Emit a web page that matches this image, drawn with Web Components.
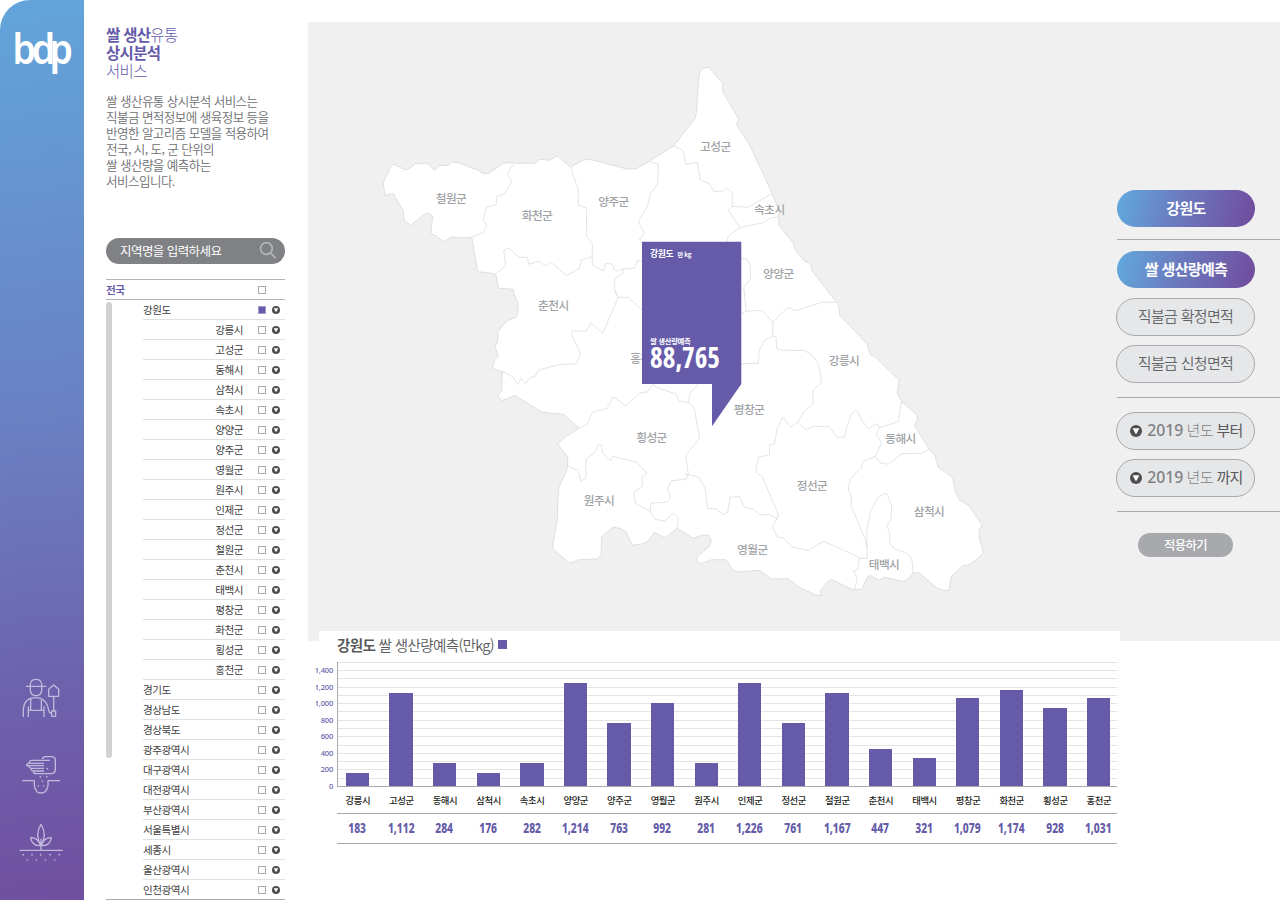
<!DOCTYPE html>
<html lang="ko">
<head>
<meta charset="utf-8">
<title>쌀 생산유통 상시분석 서비스</title>
<style>
  html, body { margin: 0; height: 900px; overflow: hidden; background: #fff; }
  body {
    font-family: "Noto Sans CJK KR", "Noto Sans", sans-serif; color: #58595b;
    --purple: #655ba9; --track: -0.045em;
  }
</style>
</head>
<body>
<bdp-app></bdp-app>
<script>
const define = (name, html, setup) => {
  const tpl = document.createElement('template');
  tpl.innerHTML = html;
  customElements.define(name, class extends HTMLElement {
    connectedCallback() {
      if (this.shadowRoot) return;
      const root = this.attachShadow({ mode: 'open' });
      root.append(tpl.content.cloneNode(true));
      if (setup) setup(root, this);
    }
  });
};

/* round badge with a white down arrow */
define('drop-mark', `
<style>
  :host { display: block; width: 8px; height: 8px; flex: none; white-space: normal; }
  svg { display: block; width: 100%; height: 100%; }
</style>
<svg viewBox="0 0 12 12"><circle cx="6" cy="6" r="6" fill="#4d4d4f"/><path d="M2.500 3.300h7L6 9.500z" fill="#fff"/></svg>`);

/* ---------- left rail ---------- */
define('nav-rail', `
<style>
  :host { display: flex; flex-direction: column; box-sizing: border-box; height: 900px; padding: 24px 0 36px 0;
    border-top-left-radius: 30px; background: linear-gradient(173deg, #62a5da 0%, #6a7fc1 48%, #6d62ac 76%, #704f9f 100%); }
  svg { display: block; fill: none; stroke: #bfb9dc; stroke-width: 4; stroke-linejoin: round; }
  .logo { width: 84px; height: 60px; stroke: none; fill: #fff; margin-bottom: auto; }
  .a { margin: 0 0 34px 20px; } .b { margin: 0 0 26px 20px; } .c { margin-left: 18px; }
  .dots { stroke-width: 5; stroke-linecap: round; }
</style>
<svg class="logo" viewBox="0 24 84 60"><text x="0" y="64.300" dx="0 -4.700 -6.300" transform="translate(12.600 0) scale(.89 1)" font-family="Noto Sans" font-weight="600" font-size="42">bdp</text></svg>
<svg class="a" width="44" height="44" viewBox="60 48 132 132">
  <path d="M78 79H139M91 79V72Q93 58 108 58T125 72V90Q124 107 108 107T91 90V79M70 171V146Q74 113 106 113Q139 113 146 150Q147 160 155 160M155 153H167V169H155ZM161 153V110M146 109V88L161 75L176 88V109ZM85 171V139M132 171V139M92 116V151M124 116V151M85 151H132"/>
</svg>
<svg class="b" width="44" height="42" viewBox="60 282 132 126">
  <path d="M128 297Q128 290 137 290H157Q166 291 166 301V329Q165 341 153 341H107Q101 341 101 335M150 301H95Q88 301 88 309M132 310H86Q80 310 80 317H132M86 318Q88 325 94 325H132M92 326Q94 333 100 333H132M66 362H103V376Q106 399 123 399T144 376V362H180"/>
  <path class="dots" d="M142 326h.1M121 350h.1M140 350h.1M127 364h.1M115 378h.1M131 378h.1"/>
</svg>
<svg class="c" width="48" height="42" viewBox="54 486 144 126">
  <path d="M59 571H188M123 571V536M123 493Q103 524 123 556Q143 524 123 493M92 532Q95 558 121 557Q116 534 92 532M154 532Q151 558 125 557Q130 534 154 532"/>
  <path class="dots" d="M70 584h.1M96 584h.1M122 584h.1M150 584h.1M178 584h.1M82 600h.1M109 600h.1M136 600h.1M164 600h.1"/>
</svg>`);

/* ---------- region list ---------- */
define('region-row', `
<style>
  :host { display: flex; align-items: center; box-sizing: border-box; height: 20px; margin-left: 37px; padding-right: 5px;
    border-bottom: 1px solid #dfe0e1; font-size: 10.6px; letter-spacing: var(--track); line-height: 18px; color: #414042; }
  .t { flex: 1; } :host([sub]) .t { text-align: right; padding-right: 15px; }
  .box { box-sizing: border-box; width: 8px; height: 8px; border: 1px solid #a7a9ac; margin-right: 6px; flex: none; }
  :host([on]) .box { background: var(--purple); border: 1px solid #a39dcb; }
  :host([all]) { margin-left: 0; padding-right: 13px; color: var(--purple); font-weight: 700; border-color: #b5b6b8; }
  :host([all]) drop-mark { display: none; }
</style>
<span class="t"><slot></slot></span><span class="box"></span><drop-mark></drop-mark>`);

define('region-list', `
<style>
  :host { display: block; width: 179px; border-top: 1px solid #b5b6b8; border-bottom: 1px solid #a7a9ac; }
  .scroll { display: flex; }
  .bar { width: 6px; height: 456px; margin: 2px -6px 0 0; border-radius: 3px; background: #d1d2d4; flex: none; }
  .rows { flex: 1; }
  region-row:last-child { border: 0; height: 19px; }
</style>
<region-row all>전국</region-row><div class="scroll"><div class="bar"></div><div class="rows"></div></div>`, root => {
  const sub = '강릉시 고성군 동해시 삼척시 속초시 양양군 양주군 영월군 원주시 인제군 정선군 철원군 춘천시 태백시 평창군 화천군 횡성군 홍천군'.split(' ');
  const top = '경기도 경상남도 경상북도 광주광역시 대구광역시 대전광역시 부산광역시 서울특별시 세종시 울산광역시 인천광역시'.split(' ');
  root.querySelector('.rows').innerHTML = '<region-row on>강원도</region-row>' +
    sub.map(n => `<region-row sub>${n}</region-row>`).join('') + top.map(n => `<region-row>${n}</region-row>`).join('');
});

define('search-box', `
<style>
  :host { display: flex; align-items: center; justify-content: space-between; box-sizing: border-box; width: 179px; height: 26px;
    border-radius: 13px; background: #808184; color: #fff; font-size: 12.5px; letter-spacing: var(--track); line-height: 26px; padding: 0 8px 0 14px; }
</style>
<span><slot></slot></span>
<svg width="18" height="18" viewBox="0 0 18 18" fill="none" stroke="#b3b5bd" stroke-width="1.7"><circle cx="7.400" cy="6.500" r="5.900"/><path d="M11.500 11l5 5.200"/></svg>`);

define('side-panel', `
<style>
  :host { display: block; padding: 25px 0 0 22px; }
  h1 { margin: 0; font-size: 15.5px; letter-spacing: var(--track); line-height: 18px; font-weight: 300; color: var(--purple); }
  h1 b { font-weight: 700; }
  p { margin: 14px 0 49px; height: 96px; font-size: 12.550px; letter-spacing: var(--track); line-height: 16px; font-weight: 350; color: #6d6e71; white-space: nowrap; }
  region-list { margin-top: 15px; }
</style>
<h1><b>쌀 생산</b>유통<br><b>상시분석</b><br>서비스</h1>
<p>쌀 생산유통 상시분석 서비스는<br>직불금 면적정보에 생육정보 등을<br>반영한 알고리즘 모델을 적용하여<br>전국, 시, 도, 군 단위의<br>쌀 생산량을 예측하는<br>서비스입니다.</p>
<search-box>지역명을 입력하세요</search-box>
<region-list></region-list>`);

/* ---------- map: border chains, each as [tile x, tile y, points at 3 units per pixel] ---------- */
const A = [370, 50], B = [580, 50], C = [470, 290], D = [630, 230], E = [690, 380], F = [780, 240];
const pts = (o, s) => s.trim().split(/\s+/).map(p => { const [x, y] = p.split(',').map(Number);
  return (o[0] + x / 3).toFixed(1) + ' ' + (o[1] + y / 3).toFixed(1); }).join('L');
const coast = [
  [A, '40,400 45,384 53,373 59,355 68,343 78,346 104,359 114,358 137,341 168,340 177,344 193,361 208,347 235,346 247,337 267,338 305,354 322,359 338,371 357,370 402,339 432,338 435,340 496,340 508,328 537,331 562,318 602,352 638,331 655,328'],
  [B, '35,329 140,357 168,357 207,334 282,287 346,204 349,190 355,100 359,65 368,56 380,52 389,55 428,101 428,124 476,208 469,223 510,287 577,431 596,480 596,525 640,580 646,600 675,635'],
  [F, '90,70 98,95 160,175 175,192 179,225 262,313 270,343 290,355 357,420 352,460 366,486 411,524 412,540 403,556 448,627 465,645'],
  [E, '738,240 746,263 788,293 795,330 808,360 835,375 877,435 866,452 869,480 881,520 842,552 818,557 783,591 777,630 765,632 742,625 685,577 668,581 652,600 637,604 584,592 566,600 542,587 533,590 515,628 485,628 424,598 411,606 391,632 393,648 375,644 328,622 295,596 245,597 208,571 140,576 130,571 107,539 65,539 32,551 20,541 22,530 60,497 64,480 55,466 35,466'],
  [C, '669,745 621,715 588,742 580,741 553,727 532,756 520,761 487,766 468,725 455,717 430,711 395,740 393,795 380,807 325,809 299,820 250,778 248,765 262,690 263,640 267,592 290,540 293,528 293,500 263,463 275,450 290,438 328,414 280,373 245,370 215,366 135,316 95,332 83,317 95,304 97,245 67,235 74,210 85,198 75,168 83,155 83,125 110,93 138,82 145,65 143,35 131,12'],
  [A, '430,718 385,715 378,675 368,670 323,665 312,600 306,565 300,562 272,564 247,560 219,575 200,558 182,552 188,500 182,493 168,490 122,526 102,510 100,482 70,431 45,436']
];
const borders = [
  [A, '432,340 412,373 425,394 404,431 380,440 379,465 350,471 340,510 350,525 341,548 303,561'],
  [A, '376,672 407,647 401,600 412,594 425,601 448,622 472,622 476,643 506,634 528,648 542,636 590,677 628,655 633,630 667,620'],
  [A, '602,352 625,420 625,465 649,474 650,560 667,580 667,645'],
  [B, '37,645 70,663 77,641 90,640 103,648 100,658 110,663 128,657 165,654 172,632 186,633'],
  [B, '128,657 130,668 106,685 103,718 115,742'],
  [B, '207,334 235,343 233,400 211,432 203,465 175,515 193,549 178,570 186,577'],
  [B, '282,287 310,302 317,343 352,337 361,390 388,400 401,424 428,424 441,415 457,428 457,469 503,472 577,431'],
  [B, '457,469 445,480 480,533 515,525 550,518 572,504 596,501'],
  [B, '480,533 455,550 443,562 443,577'],
  [D, '332,85 352,88 362,110 361,148 341,172 349,244'],
  [D, '332,252 349,244 397,241 428,277 473,233 500,242 575,217 618,217'],
  [D, '428,277 428,318 438,320 440,355 450,360 525,362 552,380 567,410 575,457 550,480 548,522 540,530 522,545 503,577'],
  [D, '428,318 405,330 388,360 385,400 332,401'],
  [E, '323,127 350,151 368,139 418,140 441,172 464,172 470,140 485,103 497,90 505,97 515,120 535,146 560,131 568,143 625,125 634,65'],
  [E, '323,127 302,142 278,112 262,145 253,192 239,195 238,225 207,231 197,265 200,278 218,292 262,395 265,410 247,440 262,470 282,474 305,500 355,512 400,484 505,530 508,535 532,535 530,455 541,395 565,350 590,340 605,375 603,420 590,438 598,455 600,490 615,508 645,517 662,532 668,550 668,580'],
  [E, '508,535 503,570 490,573 502,594 494,628'],
  [E, '568,143 559,165 575,188 556,230 518,245 515,262 480,297 475,330 485,350 483,375 528,485 530,500'],
  [E, '556,230 570,248 595,253 635,221 695,220 718,207'],
  [E, '-15,282 0,285 25,290 45,325 53,385 80,387 97,403 113,397 120,352 147,349 165,383 190,387 210,405 235,403 262,414'],
  [C, '433,0 445,22 475,22 516,60'],
  [C, '445,22 398,130 363,99 347,124 306,122 305,133 332,194 318,222 265,224 205,240 195,260 180,263 167,280 153,265 143,284 130,262 97,243'],
  [C, '328,414 350,405 368,367 412,355 430,321 467,348 510,309 532,306 548,284 570,296 618,312 627,332 655,338 660,310 682,284'],
  [C, '655,338 672,352 689,445 647,495 655,552 648,568 605,572 592,595 602,625 590,637 543,639 541,665 555,688 585,693 609,670 625,683 621,715'],
  [C, '293,528 325,541 332,573 348,565 347,508 375,487 386,463 395,465 397,487 420,512 428,499 500,516 530,550 516,560 517,590 492,605 495,640 541,663']
];
const places = [['철원군', 451, 198], ['화천군', 537, 215.5], ['양주군', 613.5, 201], ['고성군', 715.3, 146], ['속초시', 769.3, 209.5],
  ['양양군', 778.3, 273], ['춘천시', 553.3, 305], ['홍천군', 645.5, 358.5], ['강릉시', 844, 360.3], ['평창군', 749, 409.5], ['동해시', 900.5, 438.3],
  ['횡성군', 651.5, 437], ['정선군', 812, 485.3], ['원주시', 599, 500.5], ['영월군', 752.3, 549.3], ['삼척시', 929, 511.3], ['태백시', 884, 564.3]];

define('gangwon-map', `
<style>
  :host { display: block; }
  svg { display: block; }
  text { letter-spacing: var(--track); }
  .land { fill: #fff; stroke: #d3d4d5; stroke-width: .7; stroke-linejoin: round; }
  .line { fill: none; stroke: #d7d8da; stroke-width: .7; stroke-linejoin: round; }
  .place { font-size: 11.700px; font-weight: 500; fill: #a0a2a5; text-anchor: middle; }
  .tip text { fill: #fff; font-weight: 700; }
  .tip .n { font-family: "Open Sans", "Noto Sans", sans-serif; font-stretch: 75%; letter-spacing: 0; }
</style>
<svg width="809" height="619" viewBox="308 22 809 619">
  <path class="land"/><path class="line"/><g class="places"></g>
  <g class="tip">
    <path d="M642 241.700H741.300V384L712 426.300V384H642Z" fill="#655ba9"/>
    <text x="650" y="256.500" font-size="8.800">강원도</text>
    <text x="677.500" y="256.500" font-size="6.200">만 kg</text>
    <text x="650" y="343.500" font-size="7.400">쌀 생산량예측</text>
    <text class="n" x="650" y="367.700" font-size="28" textLength="70" lengthAdjust="spacingAndGlyphs">88,765</text>
  </g>
</svg>`, root => {
  root.querySelector('.land').setAttribute('d', 'M' + coast.map(c => pts(...c)).join('L') + 'Z');
  root.querySelector('.line').setAttribute('d', borders.map(c => 'M' + pts(...c)).join(''));
  root.querySelector('.places').innerHTML = places.map(([n, x, y]) => `<text class="place" x="${x}" y="${y + 4.7}">${n}</text>`).join('');
});

/* ---------- filter controls ---------- */
define('pill-button', `
<style>
  :host { display: flex; align-items: center; justify-content: center; box-sizing: border-box; width: 139px; height: 38px; margin-left: -1px; padding-bottom: 3px;
    border: 1px solid #a7a9ac; border-radius: 19px; background: #e6e7e8; font-size: 15px; letter-spacing: var(--track); font-weight: 350; color: #636467; white-space: pre; }
  :host([active]) { width: 138px; height: 37px; margin-left: 0; border: 0; color: #fff; font-weight: 700;
    background: linear-gradient(105deg, #62a5da 5%, #6a7fc1 40%, #704f9f 95%); }
  :host([small]) { width: 95px; height: 24px; margin-left: 21px; padding: 0; border: 0; background: #a7a9ac; color: #fff; font-size: 12.300px; font-weight: 500; }
</style><slot></slot>`);

define('year-pill', `
<style>
  :host { display: block; }
  pill-button { padding-left: 2px; }
  drop-mark { width: 12px; height: 12px; margin: 3px 5px 0 0; }
  .y { font-family: "Noto Sans", sans-serif; font-weight: 500; font-size: 15.800px; letter-spacing: -.1px; color: #808184; }
  .u { color: #808184; font-weight: 300; } .k { font-weight: 400; color: #58595b; }
</style>
<pill-button><drop-mark></drop-mark><span class="y">2019</span><span class="u"> 년도 </span><span class="k"><slot></slot></span></pill-button>`);

define('filter-panel', `
<style>
  :host { display: flex; flex-direction: column; padding-top: 168px; }
  hr { width: 163px; height: 1px; border: 0; margin: 12px 0 11px; background: #a7a9ac; }
  .p { margin-top: 9px; }
  .q { margin-top: 10px; }
  hr.w { margin: 14px 0; }
  hr.z { margin: 14px 0 21px; }
</style>
<pill-button active>강원도</pill-button>
<hr>
<pill-button active>쌀 생산량예측</pill-button>
<pill-button class="q">직불금 확정면적</pill-button>
<pill-button class="p">직불금 신청면적</pill-button>
<hr class="w">
<year-pill>부터</year-pill>
<year-pill class="p">까지</year-pill>
<hr class="z">
<pill-button small>적용하기</pill-button>`);

/* ---------- yield chart ---------- */
const data = [['강릉시', '183', 13], ['고성군', '1,112', 93], ['동해시', '284', 23], ['삼척시', '176', 13], ['속초시', '282', 23], ['양양군', '1,214', 103],
  ['양주군', '763', 63], ['영월군', '992', 83], ['원주시', '281', 23], ['인제군', '1,226', 103], ['정선군', '761', 63], ['철원군', '1,167', 93],
  ['춘천시', '447', 37], ['태백시', '321', 28], ['평창군', '1,079', 88], ['화천군', '1,174', 96], ['횡성군', '928', 78], ['홍천군', '1,031', 88]];
define('yield-chart', `
<style>
  :host { display: block; box-sizing: border-box; width: 801px; height: 269px; background: #fff; padding-top: 4px; }
  h2 { display: flex; align-items: center; margin: 0 0 8px 18px; height: 19px; font-size: 14.550px; letter-spacing: var(--track); font-weight: 350; line-height: 18px; white-space: pre; color: #58595b; }
  h2 b { font-weight: 700; }
  h2 i { width: 9px; height: 9px; margin-left: 4px; background: var(--purple); }
  .plot { display: flex; height: 125px; margin-left: -9px; }
  .axis { display: flex; flex-direction: column; justify-content: space-between; width: 23px; height: 126px; margin-top: 3px; padding-right: 4px; text-align: right;
    font: 500 7.500px/10px "Noto Sans"; letter-spacing: -.2px; color: var(--purple); }
  .grid { position: relative; flex: none; width: 780px; height: 125px; box-sizing: border-box; border-left: 1px solid #a7a9ac; border-bottom: 1px solid #a7a9ac; }
  .grid svg { position: absolute; left: 0; top: 0; }
  .bars, .names, .nums { display: grid; grid-template-columns: repeat(18, 43.600px); justify-items: center; }
  .bars { position: absolute; left: -2.300px; bottom: 0; height: 124px; align-items: end; }
  .bars span { width: 23.300px; background: var(--purple); }
  .names { margin: 4px 0 0 17px; font-size: 9.400px; letter-spacing: var(--track); line-height: 18px; font-weight: 500; color: #231f20; height: 22px; }
  .band { width: 780px; margin-left: 18px; border: solid #a7a9ac; border-width: 1px 0; box-sizing: border-box; height: 31px; }
  .nums { margin-left: -1.500px; font: 800 14px/28px "Noto Sans"; color: var(--purple); }
  .nums span { transform: scaleX(.73); }
</style>
<h2><b>강원도</b> 쌀 생산량예측(만kg)<i></i></h2>
<div class="plot"><div class="axis"></div><div class="grid"><svg width="779" height="124"></svg><div class="bars"></div></div></div>
<div class="names"></div>
<div class="band"><div class="nums"></div></div>`, root => {
  const $ = s => root.querySelector(s);
  $('.axis').innerHTML = ['1,400', '1,200', '1,000', '800', '600', '400', '200', '0'].map(t => `<span>${t}</span>`).join('');
  $('svg').innerHTML = [0, 8, 16, 25, 33, 41, 49, 58, 66, 74, 83, 91, 99, 107, 116].map(y => `<rect y="${y}" width="779" height="1" fill="#e3e4e5"/>`).join('');
  $('.bars').innerHTML = data.map(d => `<span style="height:${d[2]}px"></span>`).join('');
  $('.names').innerHTML = data.map(d => `<span>${d[0]}</span>`).join('');
  $('.nums').innerHTML = data.map(d => `<span>${d[1]}</span>`).join('');
});

define('bdp-app', `
<style>
  :host { display: grid; grid-template-columns: 84px 224px 972px; width: 1280px; height: 900px; overflow: hidden; background: #fff; }
  .stage { display: flex; margin-top: 22px; height: 619px; background: #f0f0f0; }
  yield-chart { position: relative; margin: -10px 0 0 11px; }
</style>
<nav-rail></nav-rail><side-panel></side-panel>
<main><div class="stage"><gangwon-map></gangwon-map><filter-panel></filter-panel></div><yield-chart></yield-chart></main>`);
</script>
</body>
</html>
